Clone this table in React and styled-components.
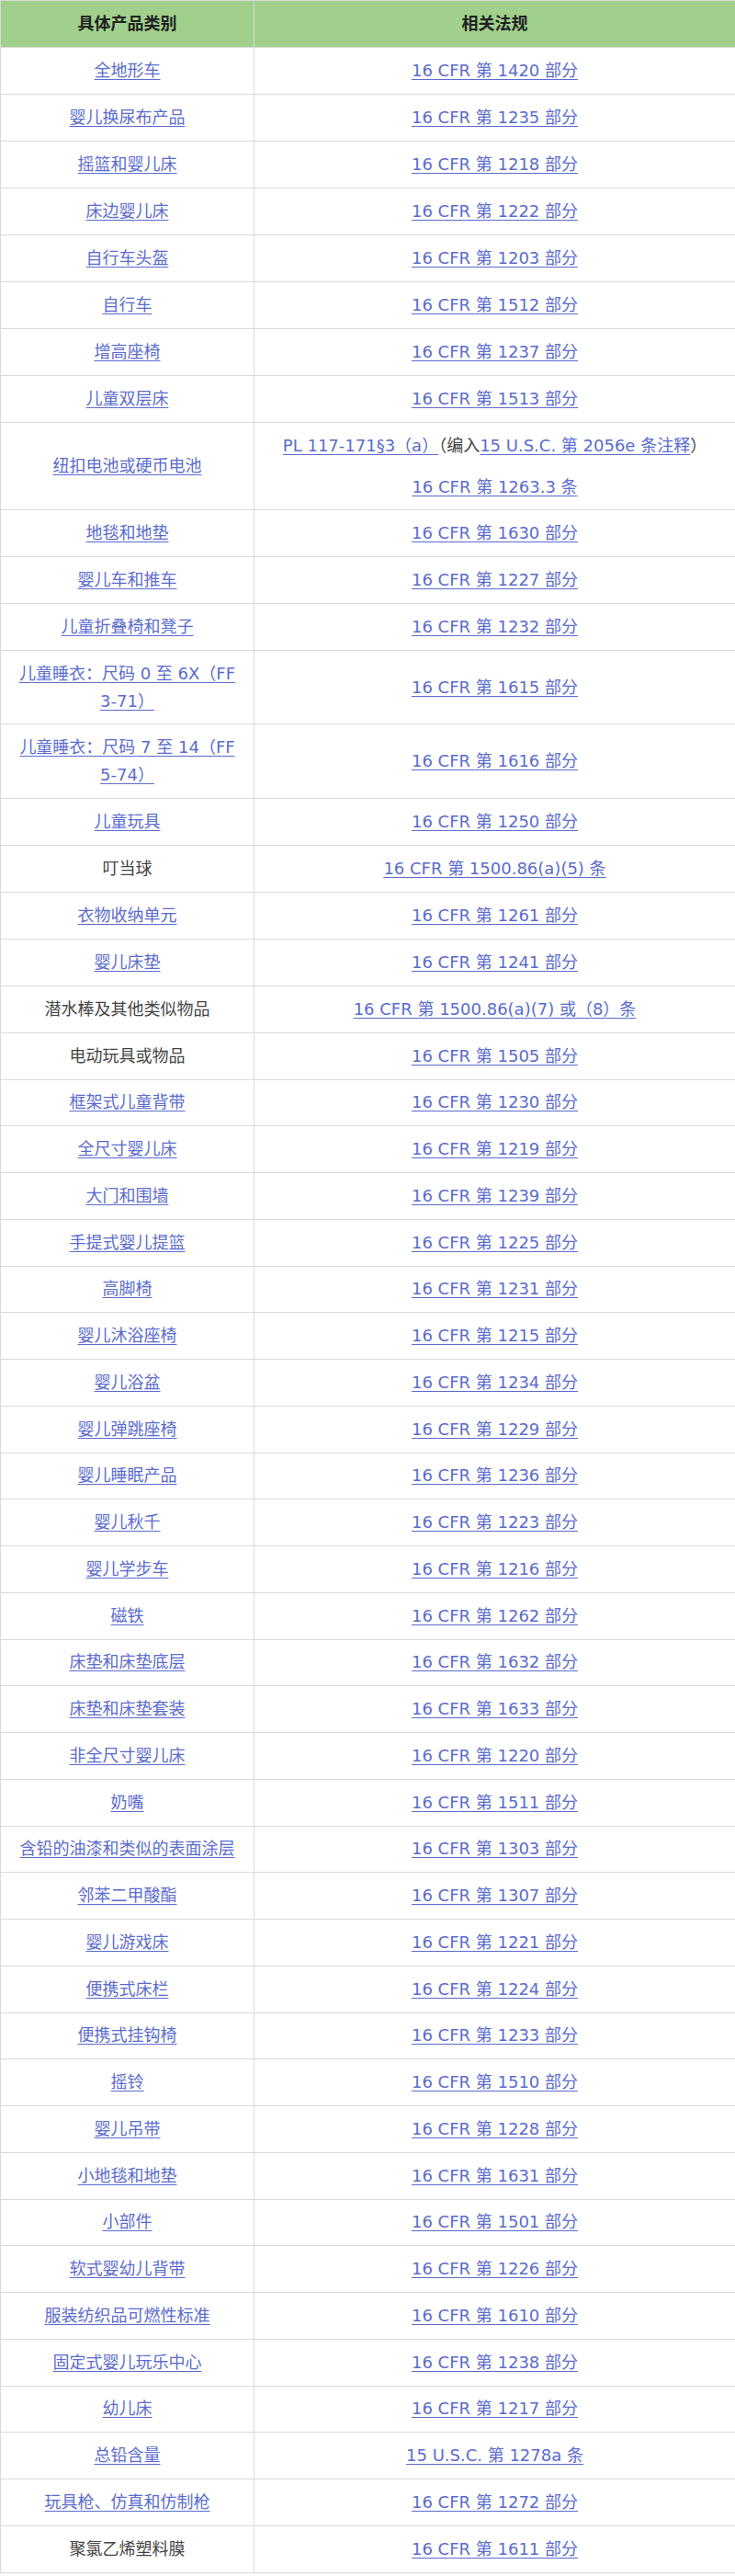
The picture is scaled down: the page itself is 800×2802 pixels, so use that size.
import React from 'react';
import styled, { createGlobalStyle } from 'styled-components';

const GlobalStyle = createGlobalStyle`
  html, body {
    margin: 0;
    padding: 0;
    background: #ffffff;
  }
  body {
    font-family: 'DejaVu Sans', 'Noto Sans CJK SC', sans-serif;
  }
`;

const Sheet = styled.div`
  width: 800px;
  display: grid;
  grid-template-columns: 276px 524px;
  box-sizing: border-box;
  border-top: 1px solid #d9d9d9;
  border-left: 1px solid #d9d9d9;
  font-size: 18px;
  color: #333;
`;

const Cell = styled.div`
  box-sizing: border-box;
  height: ${({ $h }) => $h}px;
  padding: 0 10px;
  display: flex;
  flex-direction: column;
  align-items: center;
  justify-content: center;
  text-align: center;
  line-height: 30px;
  border-right: 1px solid #d9d9d9;
  border-bottom: 1px solid #d9d9d9;
  background: ${({ $head }) => ($head ? '#a0d08c' : '#ffffff')};
  font-weight: ${({ $head }) => ($head ? 700 : 400)};
  color: ${({ $head }) => ($head ? '#222' : '#333')};
`;

const Link = styled.a`
  color: #5a6cce;
  text-decoration: underline;
  text-decoration-thickness: 1px;
  text-underline-offset: 3px;
  cursor: pointer;
`;

const Plain = styled.span`
  color: #444;
`;

const Stack = styled.div`
  display: flex;
  flex-direction: column;
  gap: 15px;
`;

const part = (n) => `16 CFR 第 ${n} 部分`;

const rows = [
  ['全地形车', part(1420)],
  ['婴儿换尿布产品', part(1235)],
  ['摇篮和婴儿床', part(1218)],
  ['床边婴儿床', part(1222)],
  ['自行车头盔', part(1203)],
  ['自行车', part(1512)],
  ['增高座椅', part(1237)],
  ['儿童双层床', part(1513)],
  ['纽扣电池或硬币电池', 'battery', 95],
  ['地毯和地垫', part(1630)],
  ['婴儿车和推车', part(1227)],
  ['儿童折叠椅和凳子', part(1232)],
  ['儿童睡衣：尺码 0 至 6X（FF 3-71）', part(1615), 80],
  ['儿童睡衣：尺码 7 至 14（FF 5-74）', part(1616), 81],
  ['儿童玩具', part(1250)],
  ['叮当球', '16 CFR 第 1500.86(a)(5) 条', 51, true],
  ['衣物收纳单元', part(1261)],
  ['婴儿床垫', part(1241)],
  ['潜水棒及其他类似物品', '16 CFR 第 1500.86(a)(7) 或（8）条', 0, true],
  ['电动玩具或物品', part(1505), 0, true],
  ['框架式儿童背带', part(1230)],
  ['全尺寸婴儿床', part(1219)],
  ['大门和围墙', part(1239)],
  ['手提式婴儿提篮', part(1225)],
  ['高脚椅', part(1231)],
  ['婴儿沐浴座椅', part(1215)],
  ['婴儿浴盆', part(1234)],
  ['婴儿弹跳座椅', part(1229)],
  ['婴儿睡眠产品', part(1236)],
  ['婴儿秋千', part(1223)],
  ['婴儿学步车', part(1216)],
  ['磁铁', part(1262)],
  ['床垫和床垫底层', part(1632)],
  ['床垫和床垫套装', part(1633)],
  ['非全尺寸婴儿床', part(1220)],
  ['奶嘴', part(1511)],
  ['含铅的油漆和类似的表面涂层', part(1303)],
  ['邻苯二甲酸酯', part(1307)],
  ['婴儿游戏床', part(1221)],
  ['便携式床栏', part(1224)],
  ['便携式挂钩椅', part(1233)],
  ['摇铃', part(1510)],
  ['婴儿吊带', part(1228)],
  ['小地毯和地垫', part(1631)],
  ['小部件', part(1501)],
  ['软式婴幼儿背带', part(1226)],
  ['服装纺织品可燃性标准', part(1610)],
  ['固定式婴儿玩乐中心', part(1238)],
  ['幼儿床', part(1217)],
  ['总铅含量', '15 U.S.C. 第 1278a 条'],
  ['玩具枪、仿真和仿制枪', part(1272)],
  ['聚氯乙烯塑料膜', part(1611), 0, true],
];

function BatteryRule() {
  return (
    <Stack>
      <div>
        <Link>PL 117-171§3（a）</Link>
        <Plain>（编入</Plain>
        <Link>15 U.S.C. 第 2056e 条注释</Link>
        <Plain>）</Plain>
      </div>
      <div>
        <Link>16 CFR 第 1263.3 条</Link>
      </div>
    </Stack>
  );
}

export default function App() {
  return (
    <>
      <GlobalStyle />
      <Sheet>
        <Cell $head $h={51}>具体产品类别</Cell>
        <Cell $head $h={51}>相关法规</Cell>
        {rows.map(([name, rule, height, plain], i) => {
          const h = height || (i < 18 ? 51 : 50.76);
          return (
            <React.Fragment key={name}>
              <Cell $h={h}>
                {plain ? <Plain>{name}</Plain> : <Link>{name}</Link>}
              </Cell>
              <Cell $h={h}>
                {rule === 'battery' ? <BatteryRule /> : <Link>{rule}</Link>}
              </Cell>
            </React.Fragment>
          );
        })}
      </Sheet>
    </>
  );
}
